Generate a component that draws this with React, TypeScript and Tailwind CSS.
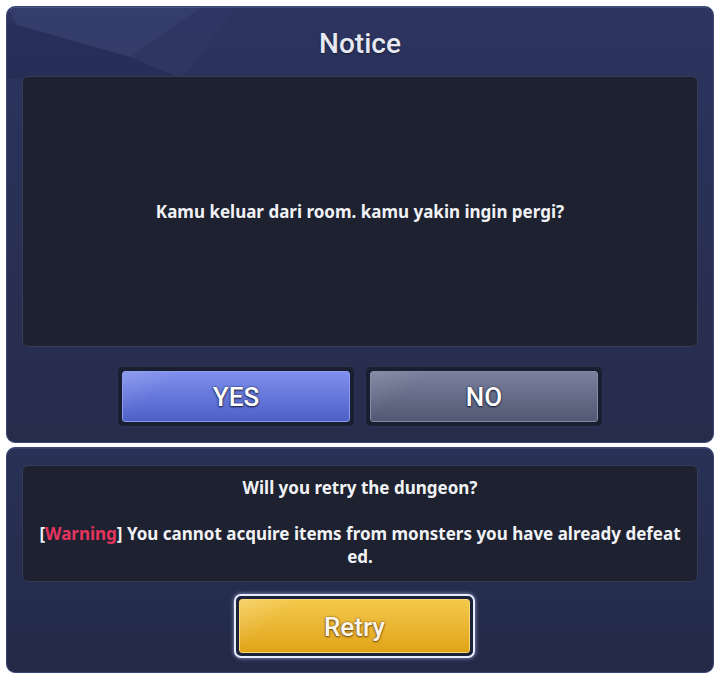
import React from "react";

const btnText =
  "[text-shadow:0_0_2px_rgba(20,24,50,0.9),0_1px_2px_rgba(20,24,50,0.9)]";

export default function App() {
  return (
    <div className="w-[720px] h-[679px] bg-white flex flex-col px-[6px] pt-[6px]">
      {/* Top panel */}
      <div className="relative h-[437px] rounded-[9px] border border-[#3f4978] bg-gradient-to-b from-[#2c3460] to-[#262c4a] flex flex-col overflow-hidden shadow-[inset_0_1px_0_rgba(120,135,200,0.25)]">
        <svg
          className="absolute left-0 top-0 pointer-events-none"
          width="260"
          height="80"
          viewBox="0 0 260 80"
        >
          <polygon points="0,0 195,0 123,50 10,18" fill="rgba(140,155,220,0.09)" />
          <polygon points="10,18 123,50 175,72 0,72 0,14" fill="rgba(10,14,35,0.10)" />
          <polygon points="123,50 195,0 230,0 175,72" fill="rgba(120,135,200,0.04)" />
        </svg>
        <div className="relative h-[69px] flex items-center justify-center pt-[4px]">
          <span className="font-['Roboto',sans-serif] font-medium text-[28px] text-[#e6e9f2] [text-shadow:0_1px_2px_rgba(0,0,0,0.5)]">
            Notice
          </span>
        </div>
        <div className="relative mx-[15px] h-[271px] rounded-[6px] border border-[#373d58] bg-[#1e212f] flex items-center justify-center">
          <span className="font-['Noto_Sans',sans-serif] font-bold text-[17px] text-[#f1f2f6]">
            Kamu keluar dari room. kamu yakin ingin pergi?
          </span>
        </div>
        <div className="flex justify-center gap-[10px] mt-[19px]">
          <div className="w-[238px] h-[61px] rounded-[6px] bg-[#1a1e31] border border-[#2c3250] p-[4px]">
            <div className="relative w-full h-full rounded-[3px] bg-gradient-to-b from-[#7f8fec] to-[#4e5fc9] border border-[#8c9bf0] flex items-center justify-center overflow-hidden">
              <div className="absolute left-0 top-0 w-[60px] h-full bg-gradient-to-br from-[rgba(255,255,255,0.12)] via-transparent to-transparent" />
              <span className={"relative font-['Roboto',sans-serif] font-medium text-[26px] text-white pt-[2px] " + btnText}>
                YES
              </span>
            </div>
          </div>
          <div className="w-[238px] h-[61px] rounded-[6px] bg-[#1a1e31] border border-[#2c3250] p-[4px]">
            <div className="relative w-full h-full rounded-[3px] bg-gradient-to-b from-[#7a809c] to-[#525973] border border-[#858ba6] flex items-center justify-center overflow-hidden">
              <div className="absolute left-0 top-0 w-[60px] h-full bg-gradient-to-br from-[rgba(255,255,255,0.10)] via-transparent to-transparent" />
              <span className={"relative font-['Roboto',sans-serif] font-medium text-[26px] text-white pt-[2px] " + btnText}>
                NO
              </span>
            </div>
          </div>
        </div>
      </div>

      {/* Gap */}
      <div className="h-[4px]" />

      {/* Bottom panel */}
      <div className="h-[226px] rounded-[9px] border border-[#3a4470] bg-gradient-to-b from-[#293157] to-[#232a47] flex flex-col shadow-[inset_0_1px_0_rgba(120,135,200,0.2)]">
        <div className="mx-[15px] mt-[17px] h-[117px] rounded-[6px] border border-[#353b56] bg-[#1e212f] flex flex-col items-center pt-[10px] font-['Noto_Sans',sans-serif] font-bold text-[17px] leading-[23px] text-[#f1f2f6] text-center">
          <span>Will you retry the dungeon?</span>
          <span>&nbsp;</span>
          <span className="whitespace-nowrap">
            [<span className="text-[#e5345f]">Warning</span>] You cannot acquire items from monsters you have already defeat
          </span>
          <span>ed.</span>
        </div>
        <div className="flex mt-[12px] ml-[227px]">
          <div className="w-[241px] h-[64px] rounded-[7px] border-[2px] border-[#e6ebff] bg-[#1c2238] p-[3px] shadow-[0_0_4px_rgba(200,210,255,0.7)]">
            <div className="relative w-full h-full rounded-[3px] bg-gradient-to-b from-[#f4c84a] to-[#e0a414] border border-[#f8d878] flex items-center justify-center overflow-hidden">
              <div className="absolute left-0 top-0 w-[60px] h-full bg-gradient-to-br from-[rgba(255,255,255,0.18)] via-transparent to-transparent" />
              <span className="relative font-['Roboto',sans-serif] font-medium text-[26px] text-[#fbf6ec] pt-[2px] [text-shadow:0_0_2px_rgba(110,70,10,0.95),0_1px_2px_rgba(110,70,10,0.95)]">
                Retry
              </span>
            </div>
          </div>
        </div>
      </div>
    </div>
  );
}
